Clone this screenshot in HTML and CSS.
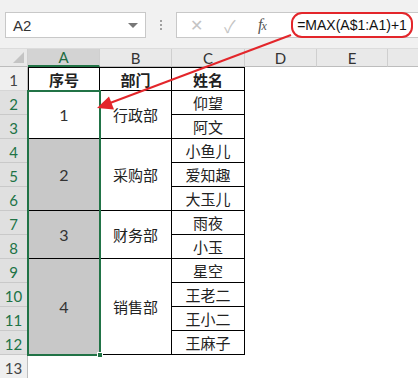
FILE: index.html
```html
<!DOCTYPE html>
<html>
<head>
<meta charset="utf-8">
<link rel="stylesheet" href="styles.css">
</head>
<body>
<div class="app">
  <div class="toolbar">
    <div class="namebox"><span class="name">A2</span><span class="caret"></span></div>
    <div class="dots"><i></i><i></i><i></i></div>
    <div class="fbar">
      <span class="ficon x">✕</span>
      <span class="ficon ok">✓</span>
      <span class="ficon fx"><i>f</i><i class="xsub">x</i></span>
      <span class="formula">=MAX(A$1:A1)+1</span>
    </div>
  </div>
  <div class="sheet">
    <div class="corner"><span class="tri"></span></div>
    <div class="ch sel">A</div>
    <div class="ch">B</div>
    <div class="ch">C</div>
    <div class="ch">D</div>
    <div class="ch">E</div>
    <div class="ch last"></div>

    <div class="rh">1</div>
    <div class="c t l b head">序号</div>
    <div class="c t b head">部门</div>
    <div class="c t b head">姓名</div>
    <div class="e"></div><div class="e"></div><div class="e"></div>

    <div class="rh on">2</div>
    <div class="c l b num s2">1</div>
    <div class="c b s2">行政部</div>
    <div class="c b">仰望</div>
    <div class="e"></div><div class="e"></div><div class="e"></div>

    <div class="rh on">3</div>
    <div class="c b">阿文</div>
    <div class="e"></div><div class="e"></div><div class="e"></div>

    <div class="rh on">4</div>
    <div class="c l b num gray s3">2</div>
    <div class="c b s3">采购部</div>
    <div class="c b">小鱼儿</div>
    <div class="e"></div><div class="e"></div><div class="e"></div>

    <div class="rh on">5</div>
    <div class="c b">爱知趣</div>
    <div class="e"></div><div class="e"></div><div class="e"></div>

    <div class="rh on">6</div>
    <div class="c b">大玉儿</div>
    <div class="e"></div><div class="e"></div><div class="e"></div>

    <div class="rh on">7</div>
    <div class="c l b num gray s2">3</div>
    <div class="c b s2">财务部</div>
    <div class="c b">雨夜</div>
    <div class="e"></div><div class="e"></div><div class="e"></div>

    <div class="rh on">8</div>
    <div class="c b">小玉</div>
    <div class="e"></div><div class="e"></div><div class="e"></div>

    <div class="rh on">9</div>
    <div class="c l b num gray s4">4</div>
    <div class="c b s4">销售部</div>
    <div class="c b">星空</div>
    <div class="e"></div><div class="e"></div><div class="e"></div>

    <div class="rh on">10</div>
    <div class="c b">王老二</div>
    <div class="e"></div><div class="e"></div><div class="e"></div>

    <div class="rh on">11</div>
    <div class="c b">王小二</div>
    <div class="e"></div><div class="e"></div><div class="e"></div>

    <div class="rh on">12</div>
    <div class="c b">王麻子</div>
    <div class="e"></div><div class="e"></div><div class="e"></div>

    <div class="rh">13</div>
    <div class="e"></div><div class="e"></div><div class="e"></div><div class="e"></div><div class="e"></div><div class="e"></div>

    <div class="selection"><span class="handle"></span></div>
  </div>
  <svg class="arrow" width="418" height="378" viewBox="0 0 418 378">
    <line x1="291" y1="35" x2="110" y2="103" stroke="#e3262b" stroke-width="2"/>
    <polygon points="97,108 109,96.5 114,109.5" fill="#e3262b"/>
  </svg>
</div>
</body>
</html>
```

FILE: styles.css
```css
* { box-sizing: border-box; }
html, body { margin: 0; padding: 0; background: #fff; }
body { width: 418px; height: 378px; overflow: hidden; font-family: "Liberation Sans", "Noto Sans CJK SC", sans-serif; color: #222; }
.app { position: relative; width: 418px; height: 378px; }

.toolbar {
  height: 49px;
  background: #f1f1f1;
  display: flex;
  align-items: flex-start;
  padding: 12px 0 0 5px;
  border-bottom: 1px solid #dcdcdc;
}
.namebox {
  width: 141px; height: 26px;
  background: #fff;
  border: 1px solid #c8c8c8;
  display: flex; align-items: center; justify-content: space-between;
  padding: 0 7px 0 7px;
}
.name { font-size: 15px; color: #333; }
.caret { width: 0; height: 0; border-left: 5px solid transparent; border-right: 5px solid transparent; border-top: 5px solid #777; margin-top: 1px; }
.dots { width: 30px; height: 26px; display: flex; flex-direction: column; align-items: center; justify-content: center; gap: 2px; }
.dots i { display: block; width: 2px; height: 2px; background: #a0a0a0; }
.fbar {
  flex: 1; height: 26px;
  background: #fff;
  border: 1px solid #c8c8c8;
  border-right: none;
  display: flex; align-items: center;
  padding-left: 13px;
}
.ficon { color: #c4c4c4; font-size: 17px; }
.ficon.x { width: 34px; font-size: 16px; }
.ficon.ok { width: 34px; font-size: 17px; }
.ficon.fx { width: 34px; font-family: "Liberation Serif", serif; color: #555; font-size: 16px; }
.ficon.fx .xsub { font-size: 12px; margin-left: -1px; }
.formula {
  margin-left: -1px;
  height: 26px;
  width: 122px;
  border: 2px solid #e3262b;
  border-radius: 11px;
  display: flex; align-items: center; justify-content: center;
  font-size: 14px; color: #111;
  letter-spacing: 0;
}

.sheet {
  position: relative;
  display: grid;
  grid-template-columns: 28px 72px 72px 73px 72px 71px 1fr;
  grid-template-rows: 18px repeat(13, 24px);
  font-size: 15px;
}
.corner { background: #e9e9e9; border-right: 1px solid #cfcfcf; border-bottom: 1px solid #bdbdbd; position: relative; }
.tri { position: absolute; right: 3px; bottom: 3px; width: 0; height: 0; border-left: 11px solid transparent; border-bottom: 11px solid #c4c4c4; }
.ch {
  background: #e9e9e9;
  border-right: 1px solid #cfcfcf;
  border-bottom: 1px solid #bdbdbd;
  display: flex; align-items: center; justify-content: center;
  font-family: "Lato", "Liberation Sans", sans-serif; font-size: 15px; color: #333;
}
.ch.sel { background: #d3d3d3; color: #1e6b42; border-bottom: 2px solid #217346; }
.ch.last { border-right: none; }
.rh {
  background: #efefef;
  border-right: 1px solid #bdbdbd;
  border-bottom: 1px solid #d6d6d6;
  display: flex; align-items: flex-end; justify-content: center;
  padding-bottom: 1px;
  font-family: "Lato", "Liberation Sans", sans-serif; font-size: 15px; color: #444;
}
.rh.on { background: #e0e0e0; color: #217346; border-bottom-color: #c9c9c9; }
.e { background: #fff; }
.c {
  display: flex; align-items: center; justify-content: center;
  font-family: "Noto Sans CJK SC", sans-serif; font-size: 15px; color: #222;
  border-right: 1px solid #000;
  background: #fff;
}
.c.t { border-top: 1px solid #000; }
.c.l { border-left: 1px solid #000; }
.c.b { border-bottom: 1px solid #000; }
.c.head { font-weight: bold; }
.c.num { font-family: "Lato", "Liberation Sans", sans-serif; font-size: 16px; color: #333; }
.c.gray { background: #c8c8c8; }
.s2 { grid-row: span 2; }
.s3 { grid-row: span 3; }
.s4 { grid-row: span 4; }

.selection {
  position: absolute;
  grid-column: 2 / 3;
  grid-row: 3 / 14;
  top: -1px; left: -1px; right: -1px; bottom: -1px;
  border: 2px solid #217346;
  pointer-events: none;
}
.handle {
  position: absolute;
  right: -4px; bottom: -4px;
  width: 6px; height: 6px;
  background: #217346;
  border: 1px solid #fff;
}
.arrow { position: absolute; left: 0; top: 0; pointer-events: none; }
```
